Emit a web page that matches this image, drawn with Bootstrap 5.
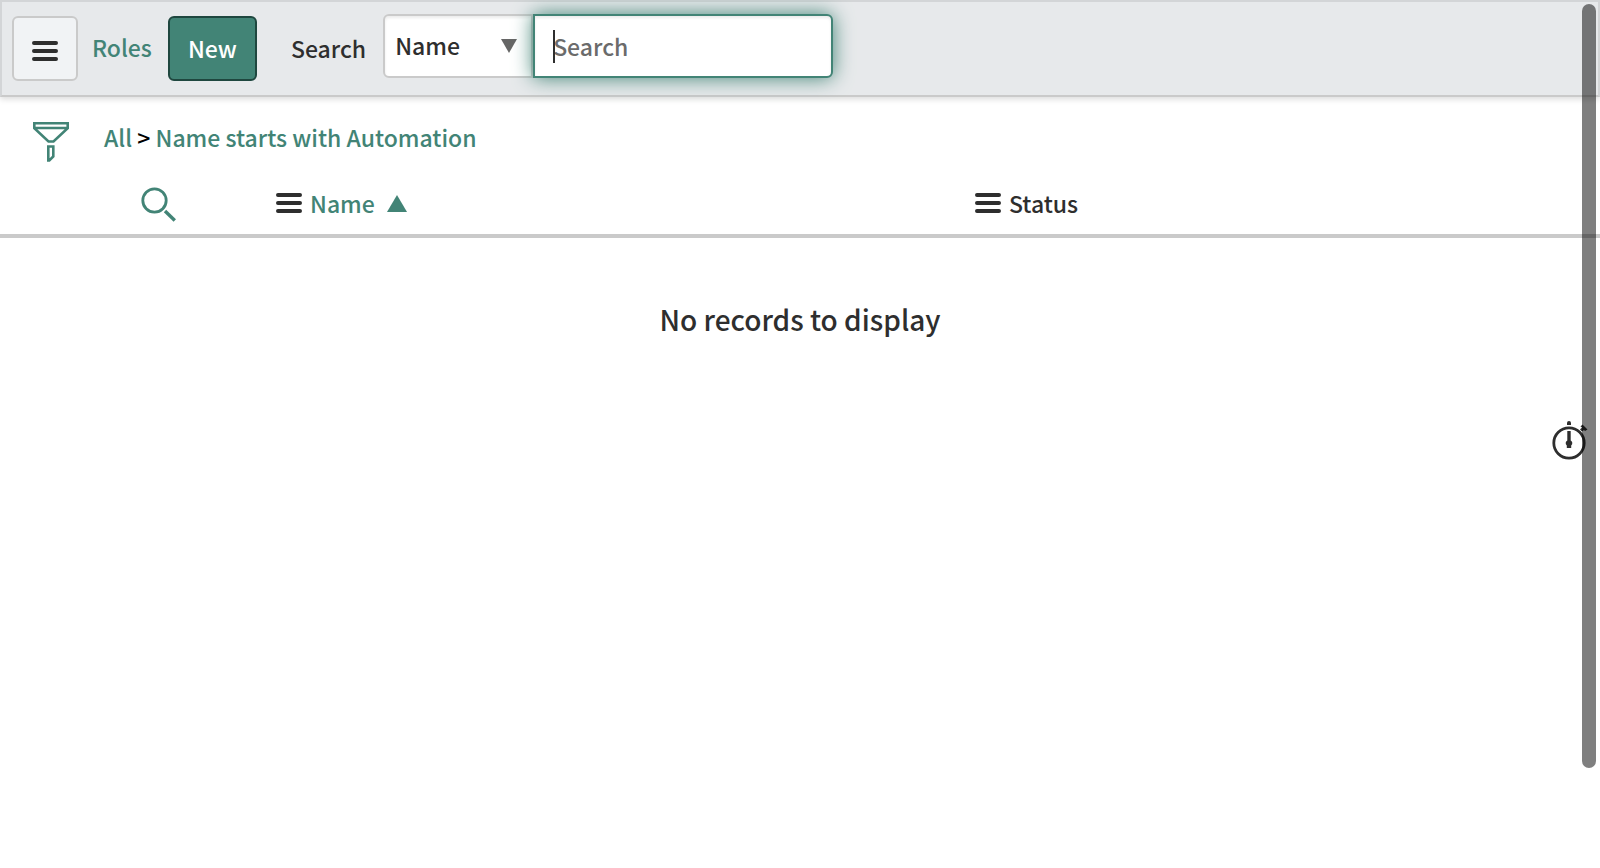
<!DOCTYPE html>
<html lang="en">
<head>
<meta charset="utf-8">
<meta name="viewport" content="width=device-width, initial-scale=1">
<title>Roles</title>
<link href="https://cdn.jsdelivr.net/npm/bootstrap@5.3.0/dist/css/bootstrap.min.css" rel="stylesheet">
<style>
  :root { --teal: #428476; --ink: #2e2e2e; --rule: #cacaca; }
  body { font-family: "Noto Sans CJK SC", "Noto Sans", sans-serif; font-size: 23px; font-weight: 500; line-height: 32px; color: var(--ink); }
  a { color: var(--teal); text-decoration: none; }
  .toolbar { border: 2px solid #d3d5d7; border-bottom-color: var(--rule); background: #e7e9eb; box-shadow: 0 2px 6px rgba(0,0,0,.15); padding: 12px 10px 14px; }
  .tool-btn { font-size: 23px; font-weight: 500; line-height: 32px; height: 65px; border: 2px solid var(--rule); border-radius: 6px; margin-top: 2px; }
  .menu-btn { width: 66px; background: #f1f3f5; padding: 4px 0 0; }
  .new-btn { width: 89px; padding: 0 0 2px; background: var(--teal); border-color: #1f473f; color: #fff; }
  .new-btn:hover { background: #376f63; color: #fff; }
  .list-title { margin: 17px 16px 0 14px; }
  .search-label { margin: 18px 17px 0 34px; }
  .toolbar .form-select, .toolbar .form-control { height: 64px; font-size: 23px; font-weight: 500; line-height: 32px; border: 2px solid var(--rule); color: var(--ink); }
  .toolbar .form-select { width: 150px; flex: none; padding: 12px 28px 14px 10px; border-radius: 6px 0 0 6px; background-color: #fff;
    background-image: url("data:image/svg+xml,%3Csvg xmlns='http://www.w3.org/2000/svg' viewBox='0 0 16 14'%3E%3Cpath fill='%23666' d='M0 0h16L8 14z'/%3E%3C/svg%3E");
    background-size: 16px 14px; background-position: right 14px top 23px; box-shadow: inset 0 2px 3px rgba(0,0,0,.08); }
  .search-field { width: 300px; }
  .toolbar .form-control { padding: 14px 18px; border-color: var(--teal); border-radius: 0 6px 6px 0; caret-color: transparent; box-shadow: inset 0 2px 3px rgba(0,0,0,.08), 0 0 20px var(--teal); }
  .form-control::placeholder { color: #6b6b6b; opacity: 1; }
  .caret { left: 20px; top: 16px; width: 2px; height: 33px; background: var(--ink); z-index: 5; }
  .crumbs { padding: 20px 32px 0; gap: 34px; height: 75px; }
  .plain { border: 0; background: none; padding: 0; color: inherit; font: inherit; }
  .records th { font-weight: 500; padding: 13px 0; border-bottom: 4px solid var(--rule); }
  .records .tools { width: 276px; padding: 15px 0 11px 141px; }
  .records .name { width: 699px; }
  .records td { padding: 61px 0 0; font-size: 28px; line-height: 40px; border: 0; }
  .timer { right: 12px; top: 420px; }
  .scroll-thumb { top: 4px; right: 4px; width: 14px; bottom: 100px; border-radius: 7px; background: rgba(0,0,0,.5); z-index: 10; pointer-events: none; }
  svg { display: block; }
</style>
</head>
<body>
<svg width="0" height="0" class="position-absolute" aria-hidden="true">
  <symbol id="bars" viewBox="0 0 26 20"><path d="M2 2h22M2 10h22M2 18h22" stroke="#2e2e2e" stroke-width="4" stroke-linecap="round"/></symbol>
</svg>

<header class="toolbar d-flex align-items-start">
  <button type="button" class="btn tool-btn menu-btn d-flex align-items-center justify-content-center" aria-label="List menu"><svg width="26" height="20"><use href="#bars"/></svg></button>
  <a href="#" class="list-title">Roles</a>
  <button type="button" class="btn tool-btn new-btn">New</button>
  <label for="query" class="search-label">Search</label>
  <div class="d-flex">
    <select id="field" class="form-select" aria-label="Search field"><option>Name</option><option>Status</option></select>
    <div class="search-field position-relative">
      <input id="query" type="text" class="form-control" placeholder="Search">
      <span class="caret position-absolute"></span>
    </div>
  </div>
</header>

<main>
  <nav class="crumbs d-flex align-items-start" aria-label="Filter">
    <button type="button" class="plain pt-1" aria-label="Show filter">
      <svg width="38" height="42" viewBox="0 0 38 42" fill="none" stroke="#428476" stroke-width="2.6"><path d="M2.300 2.300h33.400v5L21.500 20.500h-5L2.300 7.300zM2.300 7h33.400M16.300 25.500h5v10l-4 4h-1z"/></svg>
    </button>
    <div class="pt-1"><a href="#">All</a> <span class="text-black">&gt;</span> <a href="#">Name starts with Automation</a></div>
  </nav>

  <table class="records w-100">
    <thead>
      <tr>
        <th class="tools"><button type="button" class="plain d-block" aria-label="Search columns"><svg width="36" height="36" viewBox="0 0 36 36" fill="none" stroke="#428476"><circle cx="13.500" cy="13.500" r="11.700" stroke-width="2.800"/><path d="M24 24l9.800 9.500" stroke-width="3.400"/></svg></button></th>
        <th class="name"><div class="d-flex align-items-center gap-2"><button type="button" class="plain" aria-label="Name options"><svg width="26" height="20"><use href="#bars"/></svg></button><a href="#">Name</a><svg class="ms-1" width="20" height="17" viewBox="0 0 20 17"><path d="M10 0l10 17H0z" fill="#428476"/></svg></div></th>
        <th><div class="d-flex align-items-center gap-2"><button type="button" class="plain" aria-label="Status options"><svg width="26" height="20"><use href="#bars"/></svg></button><span>Status</span></div></th>
      </tr>
    </thead>
    <tbody><tr><td colspan="3" class="text-center">No records to display</td></tr></tbody>
  </table>
</main>

<button type="button" class="plain timer position-fixed" aria-label="Response time">
  <svg width="36" height="42" viewBox="0 0 36 42"><circle cx="17" cy="23" r="15.200" fill="none" stroke="#2e2e2e" stroke-width="2.800"/><path d="M15 5V3q0-2 2-2t2 2v2zM15.300 11h3.400v9.500a3 3 0 0 1 .5 5v2.500h-4.400v-2.500a3 3 0 0 1 .5-5zM30.500 4.500l5 5-2.500 1.500-1-1-2 1.500-2-2 2-2-1.500-1z" fill="#2e2e2e"/></svg>
</button>
<div class="scroll-thumb position-fixed" aria-hidden="true"></div>
<script src="https://cdn.jsdelivr.net/npm/bootstrap@5.3.0/dist/js/bootstrap.bundle.min.js"></script>
</body>
</html>
